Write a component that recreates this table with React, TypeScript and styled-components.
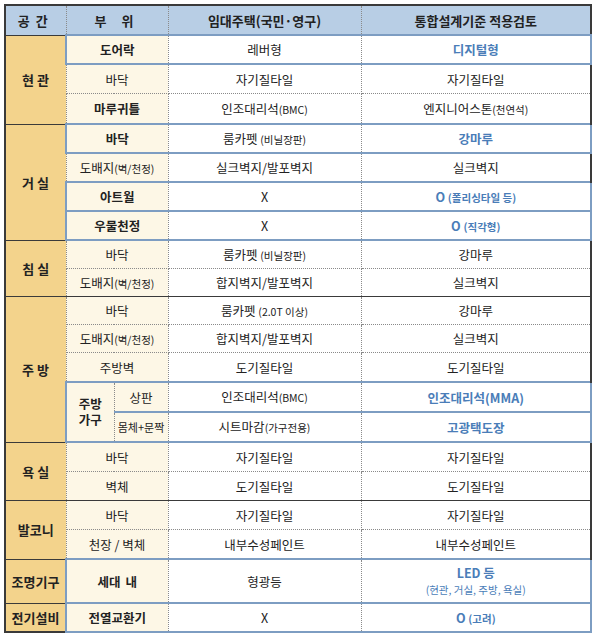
import React from 'react';
import styled, { createGlobalStyle, css } from 'styled-components';

const GlobalStyle = createGlobalStyle`
  body {
    margin: 0;
    background: #fff;
  }
`;

const Wrapper = styled.div`
  padding: 4px 0 0 4px;
`;

const Table = styled.table`
  border-collapse: collapse;
  table-layout: fixed;
  width: 586px;
  font-family: 'Noto Sans CJK KR', 'Noto Sans', sans-serif;
  font-size: 12.5px;
  line-height: 15px;
  color: #222;
  border: 2px solid #3a3a3a;
  text-align: center;
`;

const HeadCell = styled.th<{ $wide?: boolean }>`
  height: 28px;
  padding: 0;
  background: #b8cee5;
  font-weight: 700;
  font-size: 13px;
  letter-spacing: ${(p) => (p.$wide ? '6px' : '0')};
  border-right: 1px dotted #8a8a8a;
  border-bottom: 1px solid #3a3a3a;
`;

type CellProps = {
  $bold?: boolean;
  $hl?: boolean;
  $top?: boolean;
  $blue?: boolean;
  $last?: boolean;
  $first?: boolean;
  $h?: number;
};

const base = css<CellProps>`
  padding: 0;
  height: ${(p) => p.$h ?? 27}px;
  border-top: ${(p) => (p.$top ? '1px solid #3a3a3a' : '1px dotted #8a8a8a')};
  border-bottom: 1px dotted #8a8a8a;
  border-right: 1px dotted #8a8a8a;
  font-weight: ${(p) => (p.$bold ? 700 : 400)};
  white-space: nowrap;
  ${(p) =>
    p.$hl &&
    css`
      border-top: 2px solid #7d9dc2;
      border-bottom: 2px solid #7d9dc2;
    `}
`;

const SpaceCell = styled.td<CellProps>`
  ${base};
  background: #f3d38c;
  font-weight: 700;
  font-size: 13px;
  border-top: 1px solid #3a3a3a;
  border-bottom: 1px solid #3a3a3a;
`;

const PartCell = styled.td<CellProps>`
  ${base};
  background: #fdf7e6;
  ${(p) => p.$hl && p.$first && 'border-left: 2px solid #7d9dc2;'}
`;

const ValueCell = styled.td<CellProps>`
  ${base};
  background: #fff;
  color: ${(p) => (p.$blue ? '#4a7db8' : '#222')};
  ${(p) => p.$last && 'border-right: 2px solid #3a3a3a;'}
  ${(p) => p.$hl && p.$last && 'border-right: 2px solid #7d9dc2;'}
`;

const Small = styled.span<{ $size?: number }>`
  font-size: ${(p) => p.$size ?? 10.5}px;
  font-weight: inherit;
`;

const Gap = styled.span`
  display: inline-block;
  width: 5px;
`;

const Note = styled.div`
  font-size: 10.5px;
  font-weight: 400;
  line-height: 14px;
  margin-top: 2px;
`;

const Line = styled.div`
  line-height: 16px;
`;

export default function App() {
  return (
    <Wrapper>
      <GlobalStyle />
      <Table>
        <colgroup>
          <col style={{ width: 61 }} />
          <col style={{ width: 48 }} />
          <col style={{ width: 54 }} />
          <col style={{ width: 193 }} />
          <col style={{ width: 230 }} />
        </colgroup>
        <thead>
          <tr>
            <HeadCell $wide>공간</HeadCell>
            <HeadCell colSpan={2} $wide>부 위</HeadCell>
            <HeadCell>임대주택(국민·영구)</HeadCell>
            <HeadCell>통합설계기준 적용검토</HeadCell>
          </tr>
        </thead>
        <tbody>
          {/* 현관 */}
          <tr>
            <SpaceCell rowSpan={3}>현 관</SpaceCell>
            <PartCell colSpan={2} $bold $hl $first $top>도어락</PartCell>
            <ValueCell $hl $top>레버형</ValueCell>
            <ValueCell $hl $top $last $blue $bold>디지털형</ValueCell>
          </tr>
          <tr>
            <PartCell colSpan={2} $h={28}>바닥</PartCell>
            <ValueCell $h={28}>자기질타일</ValueCell>
            <ValueCell $h={28} $last>자기질타일</ValueCell>
          </tr>
          <tr>
            <PartCell colSpan={2} $bold $h={29}>마루귀틀</PartCell>
            <ValueCell $h={29}>
              인조대리석<Small>(BMC)</Small>
            </ValueCell>
            <ValueCell $h={29} $last>
              엔지니어스톤<Small>(천연석)</Small>
            </ValueCell>
          </tr>

          {/* 거실 */}
          <tr>
            <SpaceCell rowSpan={4}>거 실</SpaceCell>
            <PartCell colSpan={2} $bold $hl $first $top>바닥</PartCell>
            <ValueCell $hl $top>
              룸카펫 <Small>(비닐장판)</Small>
            </ValueCell>
            <ValueCell $hl $top $last $blue $bold>강마루</ValueCell>
          </tr>
          <tr>
            <PartCell colSpan={2}>
              도배지<Small>(벽/천정)</Small>
            </PartCell>
            <ValueCell>실크벽지/발포벽지</ValueCell>
            <ValueCell $last>실크벽지</ValueCell>
          </tr>
          <tr>
            <PartCell colSpan={2} $bold $hl $first>아트월</PartCell>
            <ValueCell $hl>X</ValueCell>
            <ValueCell $hl $last $blue $bold>
              O <Small>(폴리싱타일 등)</Small>
            </ValueCell>
          </tr>
          <tr>
            <PartCell colSpan={2} $bold $hl $first>우물천정</PartCell>
            <ValueCell $hl>X</ValueCell>
            <ValueCell $hl $last $blue $bold>
              O <Small>(직각형)</Small>
            </ValueCell>
          </tr>

          {/* 침실 */}
          <tr>
            <SpaceCell rowSpan={2}>침 실</SpaceCell>
            <PartCell colSpan={2} $top>바닥</PartCell>
            <ValueCell $top>
              룸카펫 <Small>(비닐장판)</Small>
            </ValueCell>
            <ValueCell $top $last>강마루</ValueCell>
          </tr>
          <tr>
            <PartCell colSpan={2}>
              도배지<Small>(벽/천정)</Small>
            </PartCell>
            <ValueCell>합지벽지/발포벽지</ValueCell>
            <ValueCell $last>실크벽지</ValueCell>
          </tr>

          {/* 주방 */}
          <tr>
            <SpaceCell rowSpan={5}>주 방</SpaceCell>
            <PartCell colSpan={2} $top>바닥</PartCell>
            <ValueCell $top>
              룸카펫 <Small>(2.0T 이상)</Small>
            </ValueCell>
            <ValueCell $top $last>강마루</ValueCell>
          </tr>
          <tr>
            <PartCell colSpan={2}>
              도배지<Small>(벽/천정)</Small>
            </PartCell>
            <ValueCell>합지벽지/발포벽지</ValueCell>
            <ValueCell $last>실크벽지</ValueCell>
          </tr>
          <tr>
            <PartCell colSpan={2} $h={28}>주방벽</PartCell>
            <ValueCell $h={28}>도기질타일</ValueCell>
            <ValueCell $h={28} $last>도기질타일</ValueCell>
          </tr>
          <tr>
            <PartCell rowSpan={2} $bold $hl $first>
              <Line>주방</Line>
              <Line>가구</Line>
            </PartCell>
            <PartCell $hl $h={28}>상판</PartCell>
            <ValueCell $hl $h={28}>
              인조대리석<Small>(BMC)</Small>
            </ValueCell>
            <ValueCell $hl $h={28} $last $blue $bold>인조대리석(MMA)</ValueCell>
          </tr>
          <tr>
            <PartCell $hl $h={28}>
              <Small $size={11}>몸체+문짝</Small>
            </PartCell>
            <ValueCell $hl $h={28}>
              시트마감<Small>(가구전용)</Small>
            </ValueCell>
            <ValueCell $hl $h={28} $last $blue $bold>고광택도장</ValueCell>
          </tr>

          {/* 욕실 */}
          <tr>
            <SpaceCell rowSpan={2}>욕 실</SpaceCell>
            <PartCell colSpan={2} $top $h={28}>바닥</PartCell>
            <ValueCell $top $h={28}>자기질타일</ValueCell>
            <ValueCell $top $h={28} $last>자기질타일</ValueCell>
          </tr>
          <tr>
            <PartCell colSpan={2} $h={28}>벽체</PartCell>
            <ValueCell $h={28}>도기질타일</ValueCell>
            <ValueCell $h={28} $last>도기질타일</ValueCell>
          </tr>

          {/* 발코니 */}
          <tr>
            <SpaceCell rowSpan={2}>발코니</SpaceCell>
            <PartCell colSpan={2} $top $h={28}>바닥</PartCell>
            <ValueCell $top $h={28}>자기질타일</ValueCell>
            <ValueCell $top $h={28} $last>자기질타일</ValueCell>
          </tr>
          <tr>
            <PartCell colSpan={2} $h={28}>천장 / 벽체</PartCell>
            <ValueCell $h={28}>내부수성페인트</ValueCell>
            <ValueCell $h={28} $last>내부수성페인트</ValueCell>
          </tr>

          {/* 조명기구 */}
          <tr>
            <SpaceCell>조명기구</SpaceCell>
            <PartCell colSpan={2} $bold $hl $first $top $h={42}>
              세대<Gap />내
            </PartCell>
            <ValueCell $hl $top $h={42}>형광등</ValueCell>
            <ValueCell $hl $top $last $blue $bold $h={42}>
              <Line>LED 등</Line>
              <Note>(현관, 거실, 주방, 욕실)</Note>
            </ValueCell>
          </tr>

          {/* 전기설비 */}
          <tr>
            <SpaceCell>전기설비</SpaceCell>
            <PartCell colSpan={2} $bold $hl $first $top>전열교환기</PartCell>
            <ValueCell $hl $top>X</ValueCell>
            <ValueCell $hl $top $last $blue $bold>
              O <Small>(고려)</Small>
            </ValueCell>
          </tr>
        </tbody>
      </Table>
    </Wrapper>
  );
}
